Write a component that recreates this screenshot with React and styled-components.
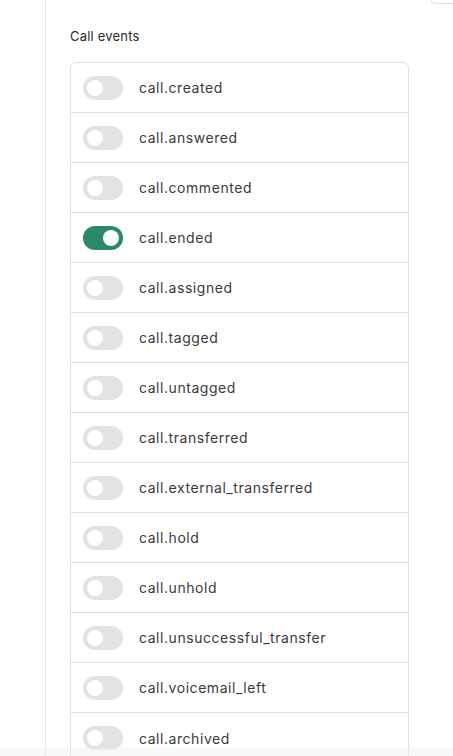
import React, { useState } from "react";
import styled, { createGlobalStyle } from "styled-components";

const GlobalStyle = createGlobalStyle`
  html, body {
    margin: 0;
    padding: 0;
    background: #ffffff;
    font-family: "Inter", "Noto Sans", sans-serif;
    overflow: hidden;
  }
`;

const Page = styled.div`
  display: flex;
  min-height: 756px;
`;

const Sidebar = styled.div`
  width: 45px;
  flex-shrink: 0;
  border-right: 1px solid #e8e8e8;
`;

const Content = styled.div`
  flex: 1;
  padding: 0 44px 0 24px;
  display: flex;
  flex-direction: column;
`;

const CornerBox = styled.div`
  align-self: flex-end;
  width: 30px;
  height: 3px;
  margin-right: -54px;
  border: 1px solid #e2e2e2;
  border-top: none;
  border-bottom-left-radius: 6px;
`;

const Title = styled.h3`
  margin: 24px 0 18px;
  font-size: 13px;
  line-height: 16px;
  font-weight: 400;
  letter-spacing: 0.2px;
  color: #2b2b2b;
`;

const List = styled.div`
  width: 337px;
  border: 1px solid #e0e0e0;
  border-radius: 6px;
  display: flex;
  flex-direction: column;
`;

const Row = styled.div`
  box-sizing: border-box;
  display: flex;
  align-items: center;
  gap: 16px;
  height: 50px;
  padding: 0 12px;
  border-bottom: 1px solid #e0e0e0;

  &:last-child {
    border-bottom: none;
  }
`;

const Track = styled.button`
  position: relative;
  width: 40px;
  height: 24px;
  padding: 0;
  border: none;
  border-radius: 12px;
  background: ${p => (p.$on ? "#2a8a67" : "#e3e3e3")};
  cursor: pointer;
  flex-shrink: 0;

  &::after {
    content: "";
    position: absolute;
    top: 4px;
    left: ${p => (p.$on ? "20px" : "4px")};
    width: 16px;
    height: 16px;
    border-radius: 50%;
    background: #ffffff;
    transition: left 0.15s;
  }
`;

const Label = styled.span`
  font-size: 14px;
  color: #3a3a3a;
  letter-spacing: 0.55px;
`;

const Footer = styled.div`
  position: fixed;
  left: 0;
  right: 0;
  bottom: 0;
  height: 8px;
  background: rgba(240, 240, 240, 0.45);
`;

const events = [
  "call.created",
  "call.answered",
  "call.commented",
  "call.ended",
  "call.assigned",
  "call.tagged",
  "call.untagged",
  "call.transferred",
  "call.external_transferred",
  "call.hold",
  "call.unhold",
  "call.unsuccessful_transfer",
  "call.voicemail_left",
  "call.archived",
];

export default function App() {
  const [enabled, setEnabled] = useState({ "call.ended": true });

  const toggle = name => setEnabled(s => ({ ...s, [name]: !s[name] }));

  return (
    <>
      <GlobalStyle />
      <Page>
        <Sidebar />
        <Content>
          <CornerBox />
          <Title>Call events</Title>
          <List>
            {events.map(name => (
              <Row key={name}>
                <Track $on={!!enabled[name]} onClick={() => toggle(name)} aria-label={name} />
                <Label>{name}</Label>
              </Row>
            ))}
          </List>
        </Content>
      </Page>
      <Footer />
    </>
  );
}
